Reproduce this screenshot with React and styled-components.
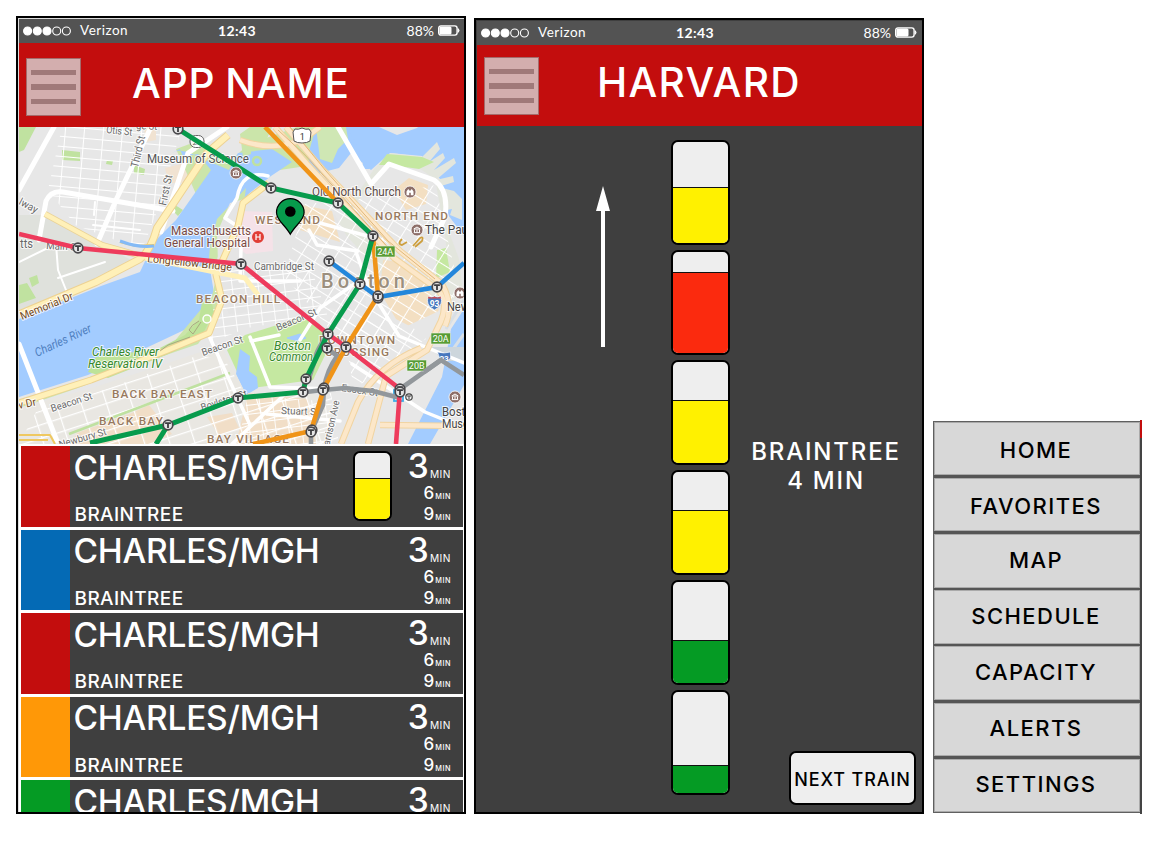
import React from "react";
import styled, { createGlobalStyle } from "styled-components";

const Global = createGlobalStyle`
  * { box-sizing: border-box; }
  body { margin: 0; background: #fff; font-family: Inter, "Liberation Sans", sans-serif; }
`;

const Page = styled.main`
  display: flex;
  width: 1164px;
  height: 844px;
  padding: 16px 0 0 16px;
  overflow: hidden;
`;

const Phone = styled.section`
  display: flex;
  flex-direction: column;
  width: 450px;
  height: ${(p) => p.$h}px;
  margin: ${(p) => p.$top}px 8px 0 0;
  border: 2px solid #000;
  padding: 1px 0 0 1px;
  background: ${(p) => p.$bg};
  overflow: hidden;
  flex: none;
`;

const StatusBar = styled.div`
  display: grid;
  grid-template-columns: 1fr auto 1fr;
  align-items: center;
  height: 24px;
  flex: none;
  padding: 0 4px 1px 4px;
  background: #535353;
  color: #fff;
  font: 400 13.5px/23px Lato, sans-serif;
`;

const Carrier = styled.div`
  display: flex;
  align-items: center;
  gap: 8px;
  letter-spacing: 0.5px;
`;

const Clock = styled.div`
  font-weight: 700;
  font-size: 14px;
  letter-spacing: 0.4px;
  padding-right: 9px;
  margin-top: -1px;
`;

const Power = styled.div`
  display: flex;
  justify-content: flex-end;
  align-items: center;
  gap: 4px;
  font-size: 14px;
  padding-right: ${(p) => p.$r}px;
`;

const Header = styled.header`
  display: flex;
  height: ${(p) => p.$h}px;
  flex: none;
  padding: ${(p) => p.$pad};
  background: #c30d0d;
`;

const MenuButton = styled.button`
  display: flex;
  flex-direction: column;
  gap: 9px;
  width: 55px;
  height: 58px;
  flex: none;
  padding: 11px 4px;
  border: 1.5px solid #a56b6b;
  background: #d3aeae;
`;

const MenuLine = styled.span`
  display: block;
  height: 5.4px;
  background: #a07979;
`;

const Title = styled.h1`
  margin: 1px 0 0 ${(p) => p.$left}px;
  color: #fff;
  font-size: 40.6px;
  line-height: 50px;
  font-weight: 550;
  letter-spacing: ${(p) => p.$ls}px;
  word-spacing: -2px;
  white-space: nowrap;
`;

const MapFrame = styled.div`
  height: 317px;
  flex: none;
  svg { display: block; }
`;

const List = styled.div`
  display: flex;
  flex-direction: column;
  gap: 3.1px;
  padding: 2px 1px 0 2px;
  flex: 1;
  min-height: 0;
  overflow: hidden;
  background: #fff;
`;

const Row = styled.article`
  display: flex;
  height: 80.5px;
  flex: none;
  background: #3f3f3f;
  color: #fff;
`;

const LineColor = styled.div`
  width: 48.5px;
  background: ${(p) => p.$c};
`;

const Names = styled.div`
  width: 283px;
  padding-left: 4px;
`;

const Station = styled.div`
  padding-top: 0.7px;
  font-size: 33.5px;
  line-height: 42px;
  font-weight: 550;
  letter-spacing: -0.25px;
`;

const Direction = styled.div`
  margin: 14.3px 0 0 1px;
  font-size: 19px;
  line-height: 24px;
  font-weight: 550;
  letter-spacing: 0.4px;
`;

const CarSlot = styled.div`
  width: 40px;
  padding-top: 5px;
`;

const Times = styled.div`
  flex: 1;
  display: flex;
  flex-direction: column;
  align-items: flex-end;
  padding-right: 12px;
`;

const Time = styled.div`
  display: flex;
  align-items: baseline;
  font-weight: 550;
  font-size: ${(p) => (p.$big ? 33.5 : 17)}px;
  line-height: ${(p) => (p.$big ? 41 : 20.7)}px;
  height: ${(p) => (p.$big ? 37.3 : 20.7)}px;
  small {
    font-size: ${(p) => (p.$big ? 10.2 : 7.3)}px;
    font-weight: ${(p) => (p.$big ? 400 : 500)};
    letter-spacing: 0.5px;
    margin-left: 1px;
  }
`;

const Car = styled.div`
  display: flex;
  flex-direction: column;
  justify-content: flex-end;
  width: ${(p) => p.$w}px;
  height: ${(p) => p.$h}px;
  flex: none;
  border: 2.5px solid #000;
  border-radius: 7px;
  background: #eee;
  overflow: hidden;
`;

const Fill = styled.div`
  height: ${(p) => p.$h}px;
  border-top: 1.5px solid #111;
  background: ${(p) => p.$c};
`;

const Body = styled.div`
  display: grid;
  grid-template-columns: 194px 59px 1fr;
  flex: 1;
  min-height: 0;
`;

const ArrowCol = styled.div`
  padding: 60px 0 0 119px;
`;

const Train = styled.div`
  display: flex;
  flex-direction: column;
  gap: 5px;
  padding-top: 14px;
`;

const Side = styled.div`
  display: flex;
  flex-direction: column;
`;

const Destination = styled.div`
  margin: 311px 0 0 0;
  text-align: center;
  color: #fff;
  font-size: 24px;
  line-height: 29px;
  font-weight: 550;
  letter-spacing: 1.8px;
`;

const NextButton = styled.button`
  align-self: flex-end;
  width: 127px;
  height: 54px;
  margin: auto 6px 7px 0;
  padding: 2px 0 0;
  border: 2.5px solid #000;
  border-radius: 7px;
  background: #eee;
  color: #000;
  font: 550 18px Inter, sans-serif;
  letter-spacing: 0.9px;
  white-space: nowrap;
`;

const Menu = styled.nav`
  display: flex;
  flex-direction: column;
  align-self: flex-start;
  width: 208px;
  height: 392px;
  flex: none;
  margin: 405px 0 0 1px;
  border: 1.5px solid #606060;
  gap: 2.8px;
  background: #555;
`;

const MenuItem = styled.a`
  display: flex;
  flex: 1;
  align-items: center;
  justify-content: center;
  padding: ${(p) => (p.$low ? "2px 2px 0 0" : "0 2px 2px 0")};
  background: #d8d8d8;
  border: 0.5px solid #aaa;
  color: #000;
  font-size: 22px;
  font-weight: 550;
  letter-spacing: 1.45px;
`;

const MenuEdge = styled.div`
  align-self: flex-start;
  flex: none;
  width: 2px;
  height: 394px;
  margin: 404px 0 0 -1px;
  background: linear-gradient(#c30d0d 0 18px, #444 18px);
`;

function Status({ inset = 0 }) {
  return (
    <StatusBar>
      <Carrier>
        <svg width="49" height="10" viewBox="0 0 49 10">
          {[0, 1, 2, 3, 4].map((i) => (
            <circle key={i} cx={4.6 + i * 9.7} cy="5" r="4" fill={i < 3 ? "#fff" : "none"} stroke="#fff" strokeWidth="1.1" />
          ))}
        </svg>
        Verizon
      </Carrier>
      <Clock>12:43</Clock>
      <Power $r={inset}>
        88%
        <svg width="22" height="11" viewBox="0 0 22 11">
          <rect x="0.7" y="0.9" width="18.4" height="9.2" rx="2.3" fill="none" stroke="#fff" strokeWidth="1.4" />
          <rect x="1.5" y="1.5" width="12" height="8" rx="1.5" fill="#fff" />
          <path d="M20.3 3.7q1.5 1.8 0 3.6z" fill="#fff" stroke="#fff" />
        </svg>
      </Power>
    </StatusBar>
  );
}

function Burger() {
  return (
    <MenuButton aria-label="Menu">
      <MenuLine />
      <MenuLine />
      <MenuLine />
    </MenuButton>
  );
}

const stations = [
  [178, 129], [271, 188], [338, 203], [373, 236], [78, 248], [241, 264], [329, 261], [360, 284],
  [378, 298], [378, 296], [437, 287], [328, 334], [327, 348], [346, 347], [306, 379], [303, 392], [324, 388],
  [323, 390], [238, 398], [168, 425], [312, 430], [311, 432], [400, 389], [400, 392],
];

const greys = { fill: "#696969" };
const labels = [
  ["Otis St", 106, 133, 26, 10.5, greys, 6],
  ["ge St", 136, 129, 21, 10.5, greys, 2],
  ["Third St", 138, 168, 32, 11, greys, -77],
  ["First St", 166, 206, 31, 11, greys, -78],
  ["Museum of Science", 147, 163, 102, 12, { fill: "#555" }, 0],
  ["Old North Church", 312, 196, 89, 12, { fill: "#5a4a48" }, 0],
  ["The Paul", 425, 234, 46, 12, { fill: "#444" }, 0],
  ["Massachusetts", 171, 235, 80, 12, { fill: "#7a4a43" }, 0],
  ["General Hospital", 164, 247, 86, 12, { fill: "#7a4a43" }, 0],
  ["Cambridge St", 254, 270, 60, 10, greys, 0],
  ["lway", 18, 204, 20, 10.5, greys, 28],
  ["tts", 20, 248, 13, 12, greys, 0],
  ["Main St", 46, 249, 33, 10, greys, 3],
  ["Longfellow Bridge", 147, 262, 85, 10.5, { fill: "#72491d" }, 6],
  ["Memorial Dr", 22, 320, 56, 11, { fill: "#72491d" }, -22],
  ["v Dr", 19, 409, 18, 11, { fill: "#72491d" }, -12],
  ["Charles River", 37, 357, 61, 12, { fill: "#4f7fc0", fontStyle: "italic", strokeOpacity: 0 }, -25],
  ["Charles River", 92, 356, 67, 12.5, { fill: "#36882c", fontStyle: "italic" }, 0],
  ["Reservation IV", 88, 368, 74, 12.5, { fill: "#36882c", fontStyle: "italic" }, 0],
  ["Boston", 274, 350, 37, 12.5, { fill: "#36882c", fontStyle: "italic" }, 0],
  ["Common", 269, 361, 44, 12.5, { fill: "#36882c", fontStyle: "italic" }, 0],
  ["Beacon St", 52, 412, 43, 10, greys, -18],
  ["Beacon St", 203, 356, 43, 10, greys, -19],
  ["Beacon St", 278, 331, 43, 10, greys, -23],
  ["Newbury St", 60, 448, 49, 10, greys, -16],
  ["Boylston St", 202, 411, 48, 10, greys, -18],
  ["Essex St", 341, 391, 37, 10, greys, 8],
  ["Stuart St", 281, 414, 38, 10, greys, 2],
  ["Harrison Ave", 328, 452, 52, 10, greys, -77],
  ["New", 447, 311, 22, 12, { fill: "#444" }, 0],
  ["Boston", 442, 416, 36, 12, { fill: "#444" }, 0],
  ["Museum", 442, 428, 42, 12, { fill: "#444" }, 0],
];
const areas = [
  ["WEST END", 255, 224, 65, 11.8],
  ["NORTH END", 375, 220, 73, 11.8],
  ["BEACON HILL", 196, 303, 84, 11.8],
  ["DOWNTOWN", 319, 344, 76, 11.8],
  ["CROSSING", 325, 356, 64, 11.8],
  ["BACK BAY EAST", 112, 398, 100, 11.8],
  ["BACK BAY", 99, 425, 64, 11.8],
  ["BAY VILLAGE", 207, 443, 82, 11.8],
];

function StationMark({ x, y }) {
  return (
    <g transform={`translate(${x} ${y})`}>
      <circle r="4.8" fill="#e6e6e6" stroke="#49484b" strokeWidth="1.7" />
      <path d="M-2.9-1.8h5.8M0-1.8V3" stroke="#3c3c3f" strokeWidth="1.8" />
    </g>
  );
}

function Poi({ x, y, glyph }) {
  return (
    <g transform={`translate(${x} ${y})`}>
      <circle r="6" fill="#8d6e68" stroke="#fff" strokeWidth="0.8" />
      {glyph === "church" ? (
        <path d="M-3.5 3.2V-.5L-1.8-3 0-1 1.8-3 3.5-.5V3.2H.8V.8H-.8V3.2z" fill="#fff" />
      ) : (
        <path d="M-3.2 2.6h6.4M-2.5 2V-.4M0 2V-.4M2.5 2V-.4M-3.2-1h6.4L0-3z" fill="none" stroke="#fff" />
      )}
    </g>
  );
}

function Shield({ x, y }) {
  return (
    <g transform={`translate(${x} ${y})`}>
      <path d="M-6-6q3 2 6 0q3 2 6 0q4 9-6 14q-10-5-6-14z" fill="#4777bd" stroke="#fff" strokeWidth="0.8" />
      <path d="M-6-5.6q3 2 6 0q3 2 6 0l.6 2.2H-6.6z" fill="#d64c4c" />
      <text y="4.6" fontSize="8.5" fontWeight="700" fill="#fff" textAnchor="middle">93</text>
    </g>
  );
}

function Exit({ x, y, children }) {
  return (
    <g transform={`translate(${x} ${y})`}>
      <rect width="19.5" height="11" fill="#579c35" stroke="#eef5e8" strokeWidth="0.6" />
      <text x="9.7" y="8.7" fontSize="9" fill="#fff" textAnchor="middle">{children}</text>
    </g>
  );
}

function TransitMap() {
  return (
    <svg width="445" height="317" viewBox="19 127 445 317" fontFamily="Roboto, sans-serif">
      <defs>
        <pattern id="gridA" width="19" height="10" patternUnits="userSpaceOnUse" patternTransform="rotate(5)">
          <path d="M0 0H19M0 0V10" stroke="#fff" strokeWidth="2" />
        </pattern>
        <pattern id="gridB" width="24" height="13" patternUnits="userSpaceOnUse" patternTransform="rotate(-18)">
          <path d="M0 0H24M0 0V13" stroke="#fff" strokeWidth="2.4" />
        </pattern>
        <pattern id="gridC" width="15" height="11" patternUnits="userSpaceOnUse" patternTransform="rotate(32)">
          <path d="M0 0H15M0 0V11" stroke="#fff" strokeWidth="2" />
        </pattern>
        <pattern id="gridD" width="13" height="9" patternUnits="userSpaceOnUse" patternTransform="rotate(-7)">
          <path d="M0 0H13M0 0V9" stroke="#fff" strokeWidth="1.8" />
        </pattern>
      </defs>
      <rect x="19" y="127" width="445" height="317" fill="#e7e7e7" />

      <path d="M19 215L48 215 75 230 135 262 88 285 19 310z" fill="#dfe1dc" />
      <path d="M19 127h17L24 150l-5 2zM62 150l18 2v9l-18-1zM19 285l8-2 9 15-17 6zM29 278l8-3 2 8-7 4zM134 165l11 4-1 6-10-2zM175 205l8 5-5 6-5-5zM107 160l6 1-1 4-6-1z" fill="#c0e2a0" />
      <path d="M62 127H182L158 209 142 250 75 225 48 190z" fill="url(#gridA)" />
      <path d="M165 168l20-5 20-4-15 24-22 0zM144 128h12v12l-10 2z" fill="#f1e3d2" />

      <path d="M176 149l19-7 36 18 18-16 48-17h52l-9 20-14 20-26 0-27 4-18 9-16 33-16 16-15-8z" fill="#cbe5aa" />
      <path d="M180 149l3 8 15-3 13 16-35 50-22 22-14 30-39 14-82 33v78l69-22 75-35 36-17 15-30-5-30 6-20 31-47 25-20 21-14-20-13-34 4-9 17-37-16q-14-6-20-1z" fill="#a3ccff" />
      <path d="M246 188l-3 22-20 26-6 24-3 14-6-7 2-20 7-28z" fill="#cbe5aa" />
      <path d="M240 134l10-7h22l-6 14-15 3 0 10-8 3z" fill="#cbe5aa" />
      <circle cx="257" cy="161" r="4" fill="#a3ccff" stroke="#bfe1a0" strokeWidth="2.5" />
      <path d="M312 175l-4-20 8-28H464V236l-22-29-2-28-18-23-32-3-19 17-20-17-12 15z" fill="#a3ccff" />
      <path d="M316 127h30l2 12-10 10-6 14-12-4z" fill="#cfe7b4" />
      <path d="M374 169l17-16 31 4 15-15 3 7-11 13 14-9 2 5-11 12 20-12 2 5-20 17 17-4 1 6-16 5 16 4 8 8v21l-12-5 2-6-15 3 12 20 10 27 4 36-45 20-81-90z" fill="#e3e6dd" />
      <path d="M385 164h28l22 15 8 43 6 45-35 24-66-77z" fill="#e7e7e7" />
      <path d="M379 165l8-11 35 3 12 5-15 7-28-4zM437 250l9-2 4 24-14 6z" fill="#c5e8a1" />
      <path d="M346 125l3 12 6-2-2 12 7 4-4 7 8 2-3 9 9 0" fill="#a3ccff" />
      <path d="M379 127l15-6h30l-7 7-20 7z" fill="#e7e7e7" />

      <path d="M19 402l72-23 82-36 39-47 5-22 7 10-7 33-19 27-55 19-65 25-59 20z" fill="#cbe5aa" />
      <path d="M88 372l8-15 62-8 27-14 14-15 3-18 9-2 3 12-14 27-34 16-58 23z" fill="#bee399" />

      <path d="M217 233l13-30 28-8 23 3 54 17 30 54 1 45-49-8-88 8-10-22z" fill="#e5e5e5" />
      <path d="M240 211l32 1 1 39-27 3-16-13z" fill="#f5e2e8" />
      <path d="M302 205l30 6 8 31-40-12zM394 190l15-12 19 7-2 19-20 6zM383 260l20 2 21 20 15 27-8 28-35-18-16-27z" fill="#f3dfc2" />
      <path d="M305 204l75-7 55-12 24 103-32 58-82 1-61-71z" fill="url(#gridC)" />
      <path d="M217 270l95 0 15 45-80 13-37 15z" fill="url(#gridD)" />

      <path d="M245 335l64-20 22 28-18 37-68 9-18-39z" fill="#c5e8a1" />
      <path d="M240 349l10 7-1 15 8 6 1 11-12 7-10-21z" fill="#a3ccff" />
      <path d="M287 338l13-4 6 4-8 3z" stroke="#a3ccff" fill="#a3ccff" />
      <path d="M19 408l73-20 76-25 53-18 28 55 61-8 20 12 0 40H19z" fill="#e9e7e2" />
      <path d="M77 433l55-20 17-8 23 29-22 10H70zM248 393l60 6 8 45h-80zM207 417l25-4 7 15-20 7z" fill="#f1dec7" />
      <path d="M36 412l73-24 90-33 26 5 22 37 84-4 8 51H19z" fill="url(#gridB)" />
      <path d="M248 395l84 7-4 42h-90z" fill="url(#gridD)" />
      <path d="M69 434L230 373" stroke="#bfe1a0" strokeWidth="2.5" />
      <path d="M405 327l36-17 23-9v143H338l3-60z" fill="#e7e7e7" />
      <path d="M341 319l54-7 31 27-72 50z" fill="url(#gridC)" />
      <path d="M451 329l13-20v76l-34 59h-22l34-67z" fill="#a3ccff" />
      <path d="M464 334L443 363M464 300l-18 29" stroke="#d8dfe5" strokeWidth="3" />
      <path d="M432 347h32v14h-22z" fill="#cdd6dc" />

      <g fill="none" stroke="#fff" strokeWidth="5" strokeLinecap="round" strokeLinejoin="round">
        <path d="M54 127L19 190M39 240L46 201Q51 190 63 192L173 211M151 127L116 200 97 244M161 232L188 153 227 127" />
        <path d="M19 344L57 441M338 127L371 184 389 164 434 180Q449 190 445 217L431 247" />
        <path d="M210 338L250 425M250 337L270 387 332 389M268 176Q242 169 237 198L225 218 240 228M241 248L240 281 300 281M309 220L382 240M309 230L317 245 358 251M356 252L369 288 399 336 464 363M352 364L425 412 464 428M279 335L251 341M267 414L340 421M232 444L285 394M300 340L320 308 360 280" strokeWidth="3.5" />
        <path d="M19 262L56 244 58 270 70 300M97 244L68 225M94 215L95 202M93 225L140 230M58 278L105 262" strokeWidth="2" />
      </g>

      <g fill="none" strokeLinejoin="round">
        <path d="M45 214L102 245 148 258" stroke="#ead397" strokeWidth="6" />
        <path d="M45 214L102 245 148 258" stroke="#fff0b8" strokeWidth="4.5" />
        <path d="M20 314L96 282 140 259Q151 250 157 228L207 153 228 135" stroke="#edd293" strokeWidth="8" />
        <path d="M20 314L96 282 140 259Q151 250 157 228L207 153 228 135" stroke="#fff0b8" strokeWidth="6" />
        <path d="M19 403L91 380 168 350 209 333 222 300 216 275 238 226 243 203 269 183" stroke="#edd293" strokeWidth="7" />
        <path d="M19 403L91 380 168 350 209 333 222 300 216 275 238 226 243 203 269 183" stroke="#fff0b8" strokeWidth="5" />
        <path d="M145 258L245 278 265 304" stroke="#fff0b8" strokeWidth="5" />
        <path d="M240 140Q275 153 305 138L320 127M275 127L307 164 394 258 437 289Q449 301 441 321L427 350 386 376 368 444M286 127L324 171 400 251 442 284Q454 305 445 326M341 444L358 402Q378 365 421 348M380 425L464 426" stroke="#f1d4a1" strokeWidth="6.5" />
        <path d="M240 140Q275 153 305 138L320 127M275 127L307 164 394 258 437 289Q449 301 441 321L427 350 386 376 368 444M286 127L324 171 400 251 442 284Q454 305 445 326M341 444L358 402Q378 365 421 348M380 425L464 426" stroke="#fce7c9" strokeWidth="4.5" />
        <path d="M290 127L326 171 388 241 435 279M278 130L305 155 392 252" stroke="#e1b778" strokeWidth="1" />
        <path d="M19 435h31l5 9M19 440h29M120 242l16 4 18-1" stroke="#efc860" strokeWidth="2" />
        <path d="M120 241q18 7 34 5" stroke="#83baf6" strokeWidth="3" />
        <path d="M402 239q-5 5 0 6l5-3M413 246l7-8q4-2 2 3l-7 6" stroke="#cd9f3e" strokeWidth="1.8" />
        <path d="M199 321q-8 4-10 9l4 4 8-12M190 337l-22 8-8 6" stroke="#a9a980" strokeWidth="1" />
        <circle cx="207" cy="319" r="4" fill="#c5e8a1" stroke="#fff" strokeWidth="1.5" />
      </g>

      <g fill="#98795e" fontWeight="500" stroke="#fff" strokeOpacity="0.75" strokeWidth="2" paintOrder="stroke">
        {areas.map(([t, x, y, w, s]) => (
          <text key={t} x={x} y={y} fontSize={s} textLength={w}>{t}</text>
        ))}
        <text x="321" y="288" fontSize="20" fontWeight="500" textLength="84" fill="#9b8f7e">Boston</text>
      </g>
      <g stroke="#fff" strokeOpacity="0.8" strokeWidth="2" paintOrder="stroke">
        {labels.map(([t, x, y, w, s, st, r], i) => (
          <text key={i} fontSize={s} textLength={w} lengthAdjust="spacingAndGlyphs" transform={`translate(${x} ${y}) rotate(${r})`} {...st}>{t}</text>
        ))}
      </g>
      <rect x="190" y="135.5" width="14" height="12" rx="5.5" fill="#fff" fillOpacity="0.8" stroke="#666" />
      <text x="197" y="144.5" fontSize="8" fill="#666" textAnchor="middle">28</text>
      <Shield x="434.5" y="302" />
      <g transform="translate(444 357)">
        <path d="M-6.5-5q6 2 13 0v6q-2 3-5 4H-3z" fill="#4777bd" stroke="#fff" strokeWidth="0.6" />
        <text y="3.5" fontSize="8" fontWeight="700" fill="#fff" textAnchor="middle">93</text>
      </g>

      <rect x="394" y="390" width="9" height="11" fill="none" stroke="#3eade8" strokeWidth="1.8" />
      <g fill="none" strokeWidth="4.6">
        <path d="M328 334Q315 352 316 357L309 378M327 348L337 356Q327 370 324 388L323 405 311 432V444M306 392L323 390 345 388 373 391 400 398M400 389L441 360 464 375" stroke="#92979b" />
        <path d="M265 127L338 203M373 236L378 296 346 347 324 388 311 431 253 444" stroke="#f09418" />
        <path d="M178 129L271 188 338 203 373 236 360 284 328 334 306 379 303 392 238 398 168 425 90 443M168 425L156 444" stroke="#079b4c" strokeWidth="5" />
        <path d="M329 261L360 284 378 297 437 287 464 263" stroke="#2387db" />
        <path d="M19 234L78 248 241 264 328 334 346 347 400 389 396 444" stroke="#ee3b5c" />
      </g>
      {stations.map(([x, y], i) => <StationMark key={i} x={x} y={y} />)}
      <circle cx="409" cy="397" r="3.2" fill="#eee" stroke="#444" strokeWidth="1.2" />
      <path d="M407 396h4M409 396v3" stroke="#444" />

      <Poi x="236" y="173" />
      <Poi x="410" y="192" glyph="church" />
      <Poi x="417" y="230" />
      <Poi x="460" y="293" glyph="church" />
      <Poi x="455" y="397" />
      <circle cx="258" cy="237" r="6" fill="#e13e36" />
      <path d="M256 234v6M260 234v6M256 237h4" stroke="#fff" strokeWidth="1.2" />
      <path d="M295 129q3 1 7-1q4 2 7 1l2 3-1 9q-3 2-8 2t-8-2l-1-9z" fill="#fff" stroke="#555" />
      <text x="302.3" y="139.5" fontSize="9" fill="#333" textAnchor="middle">1</text>
      <Exit x="375.5" y="246">24A</Exit>
      <Exit x="431" y="333">20A</Exit>
      <Exit x="407" y="360">20B</Exit>
      <path d="M424 372L441 360" stroke="#92979b" strokeWidth="4.6" />
      <path d="M290.3 234.3C285 224.5 276.5 220.5 276.5 212.5a13.8 13.8 0 0 1 27.6 0C304.1 220.5 295.6 224.5 290.3 234.3z" fill="#079b4c" stroke="#000" strokeWidth="1.2" />
      <circle cx="290.3" cy="211.5" r="5.3" fill="#000" />
    </svg>
  );
}

const rows = ["#c30d0d", "#046ab5", "#c30d0d", "#ff9807", "#059b24"];

const cars = [
  { c: "#fff100", h: 56 },
  { c: "#fb2a0e", h: 81 },
  { c: "#fff100", h: 63 },
  { c: "#fff100", h: 63 },
  { c: "#059b24", h: 43 },
  { c: "#059b24", h: 28 },
];

const items = ["HOME", "FAVORITES", "MAP", "SCHEDULE", "CAPACITY", "ALERTS", "SETTINGS"];

export default function App() {
  return (
    <Page>
      <Global />
      <Phone $top={0} $h={798} $bg="#ddd">
        <Status />
        <Header $h={84} $pad="15px 0 0 7px">
          <Burger />
          <Title $left={51} $ls={0.9}>APP NAME</Title>
        </Header>
        <MapFrame><TransitMap /></MapFrame>
        <List>
          {rows.map((c, i) => (
            <Row key={i}>
              <LineColor $c={c} />
              <Names>
                <Station>CHARLES/MGH</Station>
                <Direction>BRAINTREE</Direction>
              </Names>
              <CarSlot>
                {i === 0 && <Car $w={39} $h={70}><Fill $c="#fff100" $h={41} /></Car>}
              </CarSlot>
              <Times>
                <Time $big>3<small>MIN</small></Time>
                <Time>6<small>MIN</small></Time>
                <Time>9<small>MIN</small></Time>
              </Times>
            </Row>
          ))}
        </List>
      </Phone>
      <Phone $top={2} $h={796} $bg="#3f3f3f">
        <Status inset={1} />
        <Header $h={81} $pad="12px 0 0 7px">
          <Burger />
          <Title $left={58} $ls={1.3}>HARVARD</Title>
        </Header>
        <Body>
          <ArrowCol>
            <svg width="14" height="161" viewBox="0 0 14 161">
              <path d="M7 0l7 25H9v136H5V25H0z" fill="#fff" />
            </svg>
          </ArrowCol>
          <Train>
            {cars.map((car, i) => (
              <Car key={i} $w={59} $h={105}><Fill $c={car.c} $h={car.h} /></Car>
            ))}
          </Train>
          <Side>
            <Destination>BRAINTREE<br />4 MIN</Destination>
            <NextButton>NEXT TRAIN</NextButton>
          </Side>
        </Body>
      </Phone>
      <Menu>
        {items.map((t, i) => <MenuItem key={t} $low={i < 2}>{t}</MenuItem>)}
      </Menu>
      <MenuEdge />
    </Page>
  );
}
